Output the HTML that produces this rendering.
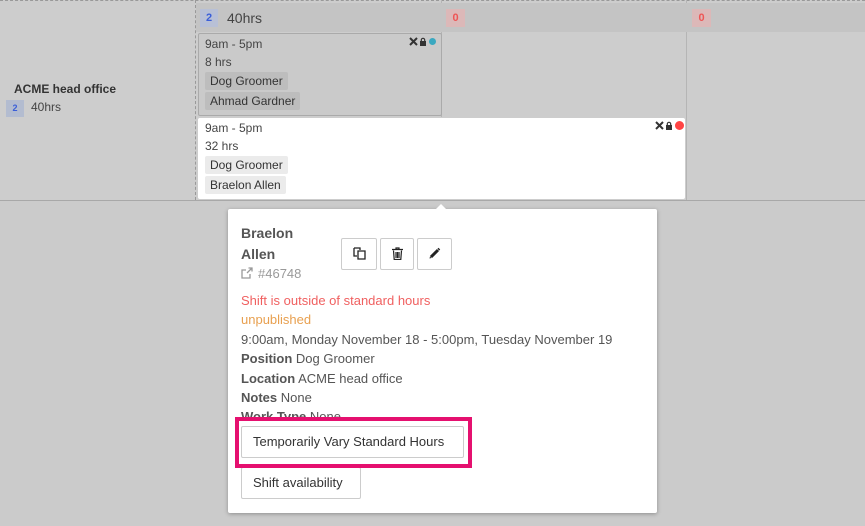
<!DOCTYPE html>
<html><head><style>
body{margin:0;width:865px;height:526px;overflow:hidden;background:#cbcbcb;font-family:"Liberation Sans",sans-serif;color:#444;position:relative}
.a{position:absolute}
.t{font-size:12px;color:#444}
.tag{position:absolute;background:#bdbdbd;font-size:12px;color:#333;padding:2px 5px;border-radius:2px}
.btn{position:absolute;background:#fff;border:1px solid #ccc;border-radius:2px;box-sizing:border-box}
</style></head><body>
<div class="a" style="left:0;top:0;width:865px;height:200px;background:#cdcdcd;border-top:1px dashed #999"></div>
<div class="a" style="left:195px;top:0;width:0;height:200px;border-left:1px dashed #999"></div>
<div class="a" style="left:441px;top:0;width:1px;height:117px;background:#b5b5b5"></div>
<div class="a" style="left:686px;top:0;width:1px;height:200px;background:#b5b5b5"></div>
<div class="a" style="left:196px;top:3px;width:669px;height:29px;background:#c4c4c4"></div>
<div class="a" style="left:0;top:200px;width:865px;height:1px;background:#a8a8a8"></div>
<div class="a" style="left:14px;top:82px;font-size:12px;font-weight:bold;color:#333">ACME head office</div>
<div class="a" style="left:6px;top:100px;width:18px;height:17px;background:#b3bcd0;color:#3a5ed8;font-size:9px;font-weight:bold;text-align:center;line-height:17px">2</div>
<div class="a t" style="left:31px;top:100px">40hrs</div>
<div class="a" style="left:200px;top:9px;width:18px;height:18px;background:#b8c0d6;color:#3a5ed8;font-size:11px;font-weight:bold;text-align:center;line-height:18px">2</div>
<div class="a" style="left:227px;top:10px;font-size:14px;color:#444">40hrs</div>
<div class="a" style="left:446px;top:9px;width:19px;height:18px;background:#dcb8b8;color:#e55;font-size:11px;font-weight:bold;text-align:center;line-height:18px">0</div>
<div class="a" style="left:692px;top:9px;width:19px;height:18px;background:#dcb8b8;color:#e55;font-size:11px;font-weight:bold;text-align:center;line-height:18px">0</div>
<div class="a" style="left:198px;top:33px;width:242px;height:81px;background:#cacaca;border:1px solid #aaa;border-radius:2px"></div>
<div class="a t" style="left:205px;top:37px">9am - 5pm</div>
<div class="a t" style="left:205px;top:55px">8 hrs</div>
<div class="tag" style="left:205px;top:72px">Dog Groomer</div>
<div class="tag" style="left:205px;top:92px">Ahmad Gardner</div>
<svg class="a" style="left:409px;top:37px" width="20" height="9" viewBox="0 0 20 9"><path d="M1 1L8 8M8 1L1 8" stroke="#333" stroke-width="2"/><rect x="11" y="4" width="6" height="5" fill="#333"/><path d="M12.3 4.5V3a1.7 1.7 0 0 1 3.4 0v1.5" stroke="#333" fill="none" stroke-width="1.2"/></svg>
<div class="a" style="left:429px;top:38px;width:7px;height:7px;border-radius:50%;background:#3aa8c0"></div>
<div class="a" style="left:198px;top:118px;width:487px;height:81px;background:#fff;border-radius:2px"></div>
<div class="a t" style="left:205px;top:121px">9am - 5pm</div>
<div class="a t" style="left:205px;top:139px">32 hrs</div>
<div class="tag" style="left:205px;top:156px;background:#ebebeb">Dog Groomer</div>
<div class="tag" style="left:205px;top:176px;background:#ebebeb">Braelon Allen</div>
<svg class="a" style="left:655px;top:121px" width="20" height="9" viewBox="0 0 20 9"><path d="M1 1L8 8M8 1L1 8" stroke="#333" stroke-width="2"/><rect x="11" y="4" width="6" height="5" fill="#333"/><path d="M12.3 4.5V3a1.7 1.7 0 0 1 3.4 0v1.5" stroke="#333" fill="none" stroke-width="1.2"/></svg>
<div class="a" style="left:675px;top:121px;width:9px;height:9px;border-radius:50%;background:#f44"></div>
<div class="a" style="left:228px;top:209px;width:429px;height:304px;background:#fff;box-shadow:0 1px 4px rgba(0,0,0,.3);border-radius:2px"></div>
<div class="a" style="left:435px;top:204px;width:0;height:0;border-left:6px solid transparent;border-right:6px solid transparent;border-bottom:6px solid #fff"></div>
<div class="a" style="left:241px;top:223px;font-size:14px;font-weight:bold;color:#555;line-height:21px">Braelon<br>Allen</div>
<svg class="a" style="left:241px;top:267px" width="12" height="12" viewBox="0 0 12 12"><path d="M9 7v4H1V3h4" stroke="#999" fill="none" stroke-width="1.3"/><path d="M6 6L11 1M7.5 1H11V4.5" stroke="#999" fill="none" stroke-width="1.3"/></svg>
<div class="a" style="left:258px;top:266px;font-size:13px;color:#999">#46748</div>
<div class="btn" style="left:341px;top:238px;width:36px;height:32px"><svg style="position:absolute;left:11px;top:8px" width="13" height="13" viewBox="0 0 13 13"><path d="M1 1h6v2M1 1v8h3" stroke="#222" fill="none" stroke-width="1.3"/><path d="M5 4h7v8H5z" stroke="#222" fill="none" stroke-width="1.3"/></svg></div>
<div class="btn" style="left:380px;top:238px;width:34px;height:32px"><svg style="position:absolute;left:11px;top:8px" width="11" height="13" viewBox="0 0 11 13"><path d="M0 2.5h11M4 2.5V1h3v1.5M1.5 3.5l.7 9h6.6l.7-9M4 5v6M5.5 5v6M7 5v6" stroke="#222" fill="none" stroke-width="1.2"/></svg></div>
<div class="btn" style="left:417px;top:238px;width:35px;height:32px"><svg style="position:absolute;left:11px;top:8px" width="12" height="12" viewBox="0 0 12 12"><path d="M2 10L9 3" stroke="#222" stroke-width="3"/><path d="M9.5 0.8l1.7 1.7-1 1-1.7-1.7zM1 9.5l-.5 2 2-.5z" fill="#222"/></svg></div>
<div class="a" style="left:241px;top:293px;font-size:13px;color:#f06060">Shift is outside of standard hours</div>
<div class="a" style="left:241px;top:312px;font-size:13px;color:#e8a050">unpublished</div>
<div class="a" style="left:241px;top:332px;font-size:13px;color:#555">9:00am, Monday November 18 - 5:00pm, Tuesday November 19</div>
<div class="a" style="left:241px;top:351px;font-size:13px;color:#555"><b>Position</b> Dog Groomer</div>
<div class="a" style="left:241px;top:371px;font-size:13px;color:#555"><b>Location</b> ACME head office</div>
<div class="a" style="left:241px;top:390px;font-size:13px;color:#555"><b>Notes</b> None</div>
<div class="a" style="left:241px;top:409px;height:9px;overflow:hidden;font-size:13px;color:#555"><b>Work Type</b> None</div>
<div class="btn" style="left:241px;top:467px;width:120px;height:32px;font-size:13px;color:#333;line-height:30px;padding-left:11px">Shift availability</div>
<div class="a" style="left:235px;top:417px;width:229px;height:43px;border:4px solid #e5106f;background:#fff"></div>
<div class="btn" style="left:241px;top:426px;width:223px;height:32px;font-size:13px;color:#333;line-height:30px;padding-left:11px">Temporarily Vary Standard Hours</div>
</body></html>
